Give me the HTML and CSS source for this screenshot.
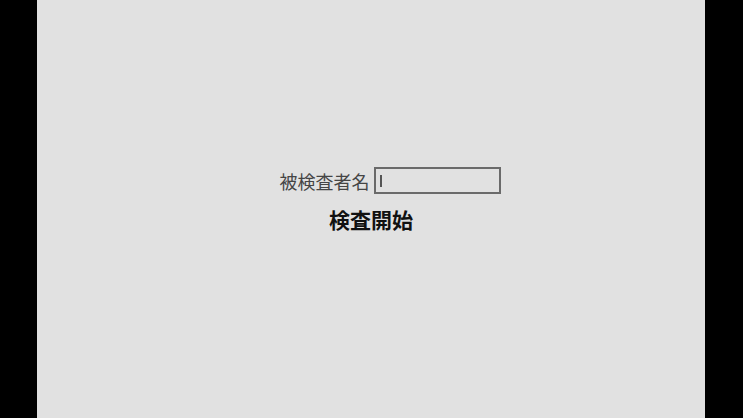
FILE: index.html
```html
<!DOCTYPE html>
<html lang="ja">
<head>
<meta charset="utf-8">
<title>検査開始</title>
<link rel="stylesheet" href="styles.css">
</head>
<body>
<main class="screen">
  <div class="form-row">
    <label class="label" for="name">被検査者名</label>
    <div class="field" id="name"><span class="caret"></span></div>
  </div>
  <div class="start">検査開始</div>
</main>
</body>
</html>
```

FILE: styles.css
```css
html, body {
  margin: 0;
  padding: 0;
  height: 100%;
}
body {
  background: #000;
  padding-left: 37px;
  box-sizing: border-box;
  font-family: "Noto Sans CJK JP", "Noto Sans", sans-serif;
}
.screen {
  width: 668px;
  height: 418px;
  background: #e1e1e1;
  display: flex;
  flex-direction: column;
  align-items: center;
  padding-top: 167px;
  box-sizing: border-box;
}
.form-row {
  display: flex;
  align-items: center;
  gap: 4px;
  padding-left: 38px;
}
.label {
  font-size: 18px;
  line-height: 1;
  color: #454545;
  letter-spacing: 0;
}
.field {
  width: 127px;
  height: 27px;
  box-sizing: border-box;
  border: 2px solid #6a6a6a;
  display: flex;
  align-items: center;
  padding-left: 4px;
}
.caret {
  width: 2px;
  height: 12px;
  background: #555;
}
.start {
  margin-top: 15px;
  font-size: 21px;
  line-height: 1;
  font-weight: 700;
  color: #111;
}
```
